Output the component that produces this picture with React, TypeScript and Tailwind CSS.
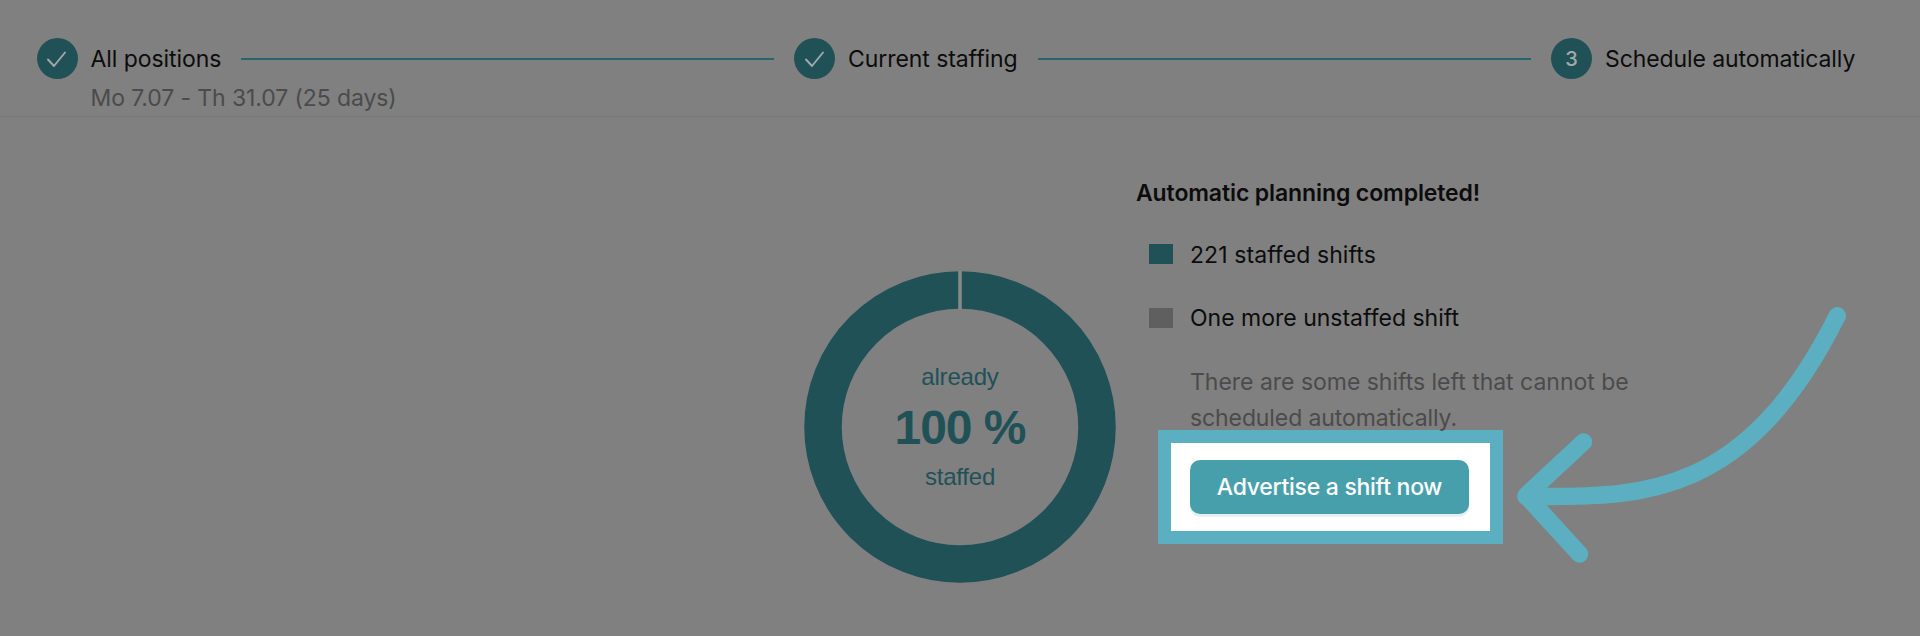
import React from 'react';

type Step = { label: string; sub?: string; number?: number; labelClass: string };

const steps: Step[] = [
  { label: 'All positions', sub: 'Mo 7.07 - Th 31.07 (25 days)', labelClass: 'w-[130px] tracking-[-0.06px]' },
  { label: 'Current staffing', labelClass: 'w-[170px] tracking-[-0.07px]' },
  { label: 'Schedule automatically', number: 3, labelClass: 'w-[252px] tracking-[-0.09px]' },
];

const CheckIcon = () => (
  <svg className="h-10 w-10" viewBox="0 0 40 40" fill="none" stroke="#a3a8a9" strokeWidth="1.9" strokeLinecap="round" strokeLinejoin="round">
    <path d="M11 20.5 L17 27 L28 13.5" />
  </svg>
);

const StepItem = ({ step }: { step: Step }) => (
  <div className="flex shrink-0 items-start">
    <div className="mt-[-1px] flex h-[41px] w-[41px] items-center justify-center rounded-full bg-[#205157] text-xl font-medium text-[#a3a8a9]">
      {step.number ? step.number : <CheckIcon />}
    </div>
    <div className="ml-[13px] whitespace-nowrap text-[23px]">
      <div className={`leading-10 text-[#0c0c0c] ${step.labelClass}`}>{step.label}</div>
      {step.sub && <div className="h-0 w-0 leading-[38px] tracking-[-0.1px] text-[#4b4b4b]">{step.sub}</div>}
    </div>
  </div>
);

const Stepper = () => (
  <header className="flex h-[117px] items-start border-b border-[#777777] pl-[36.5px] pt-[39px]">
    <StepItem step={steps[0]} />
    <div className="ml-5 mr-[20.5px] mt-[19px] h-0.5 w-[533px] bg-[#2b636c]" />
    <StepItem step={steps[1]} />
    <div className="mx-5 mt-[19px] h-0.5 w-[493px] bg-[#2b636c]" />
    <StepItem step={steps[2]} />
  </header>
);

const Donut = () => (
  <div className="grid h-[312px] w-[312px] shrink-0 text-[#205157]">
    <svg className="col-start-1 row-start-1 h-[312px] w-[312px]" viewBox="0 0 312 312" fill="none">
      <circle cx="156" cy="156" r="137" stroke="#205157" strokeWidth="37.5" />
      <path d="M156 0 V38" stroke="#888888" strokeWidth="3.6" />
    </svg>
    <div className="col-start-1 row-start-1 flex flex-col items-center justify-center font-['Liberation_Sans',sans-serif]">
      <div className="text-2xl leading-[50px] tracking-[-0.2px]">already</div>
      <div className="pt-0.5 text-[48px] font-bold leading-[48px] tracking-[-1px]">100 %</div>
      <div className="text-2xl leading-[50px] tracking-[-0.2px]">staffed</div>
    </div>
  </div>
);

const Summary = () => (
  <section className="ml-5 w-[520px] whitespace-nowrap text-[23px] text-[#0c0c0c]">
    <h1 className="pt-px font-semibold leading-[36px] tracking-[-0.11px]">Automatic planning completed!</h1>
    <div className="mt-[25px] flex h-9 items-center pl-[13px]">
      <span className="h-5 w-6 bg-[#205157]" />
      <span className="ml-[17px] pt-0.5 tracking-[0.08px]">221 staffed shifts</span>
    </div>
    <div className="mt-7 flex h-9 items-center pl-[13px]">
      <span className="h-5 w-6 bg-[#5f5f5f]" />
      <span className="ml-[17px]">One more unstaffed shift</span>
    </div>
    <p className="mt-7 pl-[54px] leading-[36px] tracking-[-0.02px] text-[#4b4b4b]">
      There are some shifts left that cannot be
      <br />
      <span className="tracking-[-0.1px]">scheduled automatically.</span>
    </p>
    <div className="ml-[22px] mt-[-6px] flex h-[114px] w-[345px] items-center border-[13px] border-[#5bafc1] bg-white pl-[19px]">
      <button className="h-[54px] w-[279px] rounded-[10px] bg-[#489fac] text-[23px] font-medium tracking-[-0.28px] text-white shadow-[0_3px_1px_#e6eeef]">
        Advertise a shift now
      </button>
    </div>
  </section>
);

const Arrow = () => (
  <svg
    className="absolute left-[1500px] top-[290px] h-[290px] w-[380px]"
    viewBox="0 0 380 290"
    fill="none"
    stroke="#5bafc1"
    strokeWidth="17.4"
    strokeLinecap="round"
    strokeLinejoin="round"
  >
    <path d="M337.3 25.7 C243 215 133 206.5 26 206.5" />
    <path d="M83.5 152 L26 205.5 L79.5 264" />
  </svg>
);

export default function App() {
  return (
    <div className="relative h-[636px] w-[1920px] overflow-hidden bg-[#808080] font-['Inter',sans-serif]">
      <Stepper />
      <main className="flex items-start pl-[804px] pt-[57px]">
        <div className="pt-[97px]">
          <Donut />
        </div>
        <Summary />
      </main>
      <Arrow />
    </div>
  );
}
